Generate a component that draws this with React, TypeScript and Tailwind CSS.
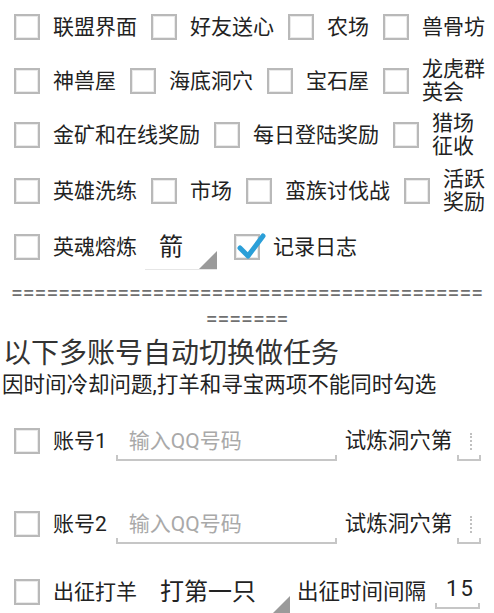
const FONT = "font-[family-name:Roboto,'Noto_Sans_CJK_SC',sans-serif]";

type BoxProp = { checked?: boolean };
const Box = ({ checked = false }: BoxProp) => {
  return (
    <span className="relative inline-block w-[26px] h-[26px] shrink-0 border-2 border-[#b9b9b9] bg-white shadow-[inset_0_0_0_1px_#ebebeb]">
      {checked && (
        <svg
          width="32"
          height="30"
          viewBox="0 0 32 30"
          className="absolute -left-[2px] -top-[3px] overflow-visible"
        >
          <polyline
            points="6,15 14,23 29,3"
            fill="none"
            stroke="#2b9fd8"
            strokeWidth="5"
            strokeLinecap="round"
            strokeLinejoin="round"
          />
        </svg>
      )}
    </span>
  );
};

type ItemProp = { label: React.ReactNode; checked?: boolean; two?: boolean };
const Item = ({ label, checked, two }: ItemProp) => {
  return (
    <div className="flex items-center shrink-0">
      <Box checked={checked} />
      <span
        className={
          two
            ? "ml-[13px] text-[21px] leading-[23px] text-[#222]"
            : "ml-[13px] text-[21px] leading-[28px] text-[#222] whitespace-nowrap"
        }
      >
        {label}
      </span>
    </div>
  );
};

const Triangle = () => (
  <svg width="18" height="18" viewBox="0 0 18 18" className="absolute right-0 bottom-0">
    <polygon points="18,0 18,18 0,18" fill="#9a9a9a" />
  </svg>
);

type SpinnerProp = { text: string; width: string; ml: string };
const Spinner = ({ text, width, ml }: SpinnerProp) => {
  return (
    <div className={`relative flex items-center h-[46px] pl-[14px] shrink-0 border-b border-[#e6e6e6] ${width} ${ml}`}>
      <span className="text-[24px] leading-[30px] text-[#222] whitespace-nowrap">{text}</span>
      <Triangle />
    </div>
  );
};

const Underline = () => (
  <div className="h-[6px] border-x-2 border-b-2 border-[#c6c6c6]" />
);

export default function App() {
  return (
    <div className={`w-[494px] h-[613px] overflow-hidden bg-white ${FONT}`}>
      {/* row 1 */}
      <div className="flex items-center h-[54px] pl-[14px] gap-[14px]">
        <Item label="联盟界面" />
        <Item label="好友送心" />
        <Item label="农场" />
        <Item label="兽骨坊" />
      </div>
      {/* row 2 */}
      <div className="flex items-center h-[53px] pl-[14px] gap-[14px]">
        <Item label="神兽屋" />
        <Item label="海底洞穴" />
        <Item label="宝石屋" />
        <Item two label={<>龙虎群<br />英会</>} />
      </div>
      {/* row 3 */}
      <div className="flex items-center h-[56px] pl-[14px] gap-[14px]">
        <Item label="金矿和在线奖励" />
        <Item label="每日登陆奖励" />
        <Item two label={<>猎场<br />征收</>} />
      </div>
      {/* row 4 */}
      <div className="flex items-center h-[56px] pl-[14px] gap-[14px]">
        <Item label="英雄洗练" />
        <Item label="市场" />
        <Item label="蛮族讨伐战" />
        <Item two label={<>活跃<br />奖励</>} />
      </div>
      {/* row 5 */}
      <div className="flex items-center h-[56px] pl-[14px]">
        <Item label="英魂熔炼" />
        <Spinner text="箭" width="w-[72px]" ml="ml-[8px]" />
        <div className="ml-[17px]">
          <Item checked label="记录日志" />
        </div>
      </div>

      <div className="mt-[5px] text-center text-[21.5px] leading-[26px] text-[#707070] font-[family-name:Roboto,sans-serif] whitespace-nowrap">
        ========================================
        <br />
        =======
      </div>

      <div className="mt-[6px] pl-[3px] text-[28px] leading-[32px] text-[#333]">
        以下多账号自动切换做任务
      </div>
      <div className="mt-[2px] pl-[2px] text-[21.5px] leading-[26px] text-[#222] whitespace-nowrap">
        因时间冷却问题,打羊和寻宝两项不能同时勾选
      </div>

      {[
        { n: "账号1", h: "h-[86px]" },
        { n: "账号2", h: "h-[80px]" },
      ].map((a) => (
        <div key={a.n} className={`flex items-center pl-[14px] ${a.h}`}>
          <Item label={a.n} />
          <div className="ml-[9px] mt-[6px] w-[221px] flex flex-col">
            <span className="pl-[13px] text-[21px] leading-[28px] text-[#a9a9a9]">输入QQ号码</span>
            <Underline />
          </div>
          <span className="ml-[8px] text-[21.5px] leading-[28px] text-[#222] whitespace-nowrap">试炼洞穴第</span>
          <div className="ml-[5px] mt-[6px] w-[24px] flex flex-col">
            <div className="h-[28px] flex items-center pl-[13px]">
              <div className="h-[17px] border-l-2 border-dotted border-[#c0c0c0]" />
            </div>
            <Underline />
          </div>
        </div>
      ))}

      {/* row 7 */}
      <div className="flex items-center h-[56px] pl-[14px]">
        <Item label="出征打羊" />
        <Spinner text="打第一只" width="w-[144px]" ml="ml-[9px]" />
        <span className="ml-[7px] text-[21.5px] leading-[28px] text-[#222] whitespace-nowrap">出征时间间隔</span>
        <div className="ml-[9px] w-[45px] flex flex-col">
          <span className="pl-[11px] text-[22px] leading-[28px] tracking-[2px] text-[#222]">15</span>
          <Underline />
        </div>
      </div>
    </div>
  );
}
